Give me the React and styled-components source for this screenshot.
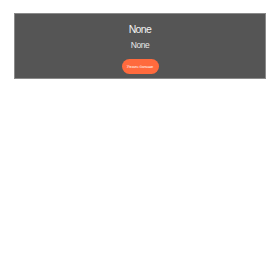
import React from 'react';
import styled, { createGlobalStyle } from 'styled-components';

const GlobalStyle = createGlobalStyle`
  body {
    margin: 0;
    background: #fff;
    font-family: 'Liberation Sans', Arial, sans-serif;
  }
`;

const Page = styled.div`
  width: 280px;
  height: 280px;
  padding: 13px 14px 0;
  box-sizing: border-box;
`;

const Banner = styled.section`
  background: #555555;
  border: 1px solid #8a8a8a;
  height: 66px;
  box-sizing: border-box;
  display: flex;
  flex-direction: column;
  align-items: center;
  padding-top: 8px;
  color: #f2f2f2;
`;

const Title = styled.h1`
  margin: 0;
  font-size: 10.5px;
  font-weight: 400;
  letter-spacing: -0.6px;
  line-height: 14px;
`;

const Subtitle = styled.p`
  margin: 3px 0 0;
  font-size: 8.5px;
  letter-spacing: -0.5px;
  line-height: 12px;
  color: #e8e8e8;
`;

const Button = styled.a`
  margin-top: 8px;
  display: flex;
  align-items: center;
  justify-content: center;
  width: 37px;
  height: 15px;
  border-radius: 8px;
  background: #ff6a3d;
  color: #fff;
  font-size: 4px;
  letter-spacing: -0.1px;
  white-space: nowrap;
  text-decoration: none;
`;

const App = () => (
  <>
    <GlobalStyle />
    <Page>
      <Banner>
        <Title>None</Title>
        <Subtitle>None</Subtitle>
        <Button href="#">Узнать больше</Button>
      </Banner>
    </Page>
  </>
);

export default App;
